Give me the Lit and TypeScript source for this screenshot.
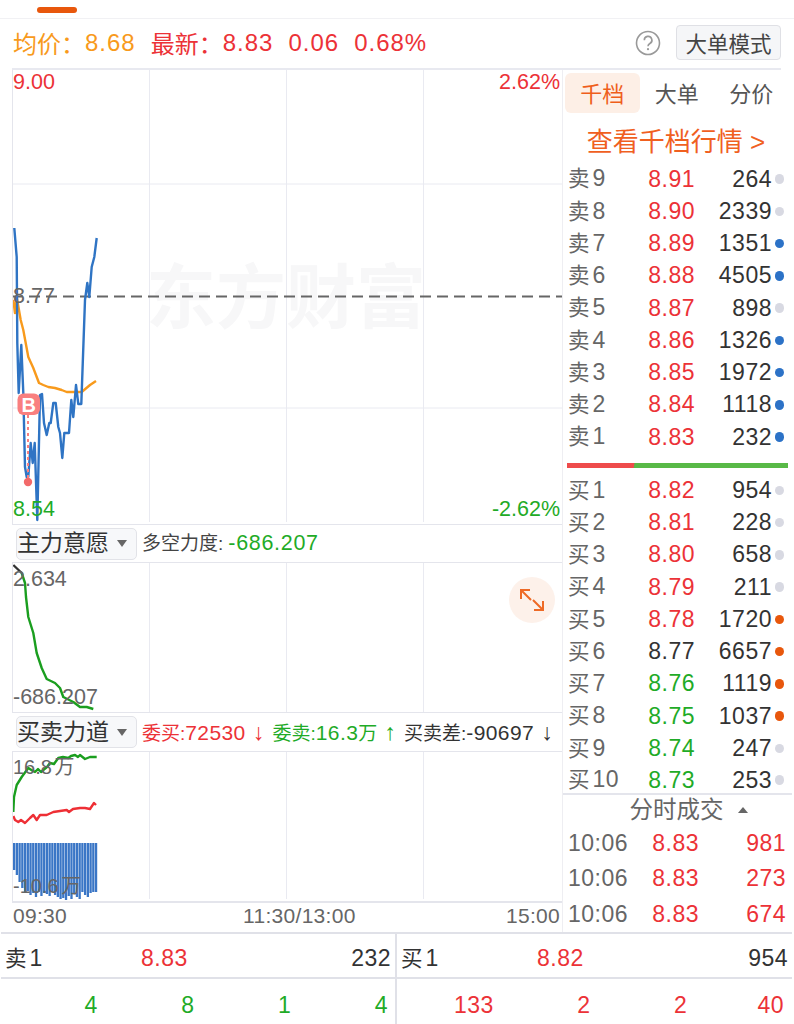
import { LitElement, html, css, svg } from "lit";
import { customElement } from "lit/decorators.js";

type Pt = [number, number];
const path = (p: Pt[]) => p.map((a) => a.join(",")).join(" ");

const BLUE: Pt[] = [[14.3,228],[16.7,257],[17,297],[17.3,343],[18.7,393],[21.3,345],[23.3,393],[25,467],[26.7,477],[28.3,477],[30.7,443],[32.7,463],[34.7,443],[37.3,520],[40,395],[42,394],[44,423],[46.7,435],[49.3,423],[50.7,423],[53.3,403],[55.7,403],[58.3,427],[60,433],[62.3,458],[64.3,433],[69,433],[71.3,400],[73.3,417],[76,385],[78.3,404],[81.3,404],[85,300],[87.3,283],[89.3,297],[91.7,267],[94.3,257],[96.7,238]];
const AVG: Pt[] = [[13.3,300],[15,313],[16.7,297],[20.7,320],[23.3,330],[28.3,357],[33.3,368],[39,383],[43.3,385],[48.3,387],[55,388],[61.7,390],[66.7,392],[81.7,392],[90,385],[96,381]];
const WILL: Pt[] = [[21.7,573],[25,583],[26,597],[28.3,617],[33.3,633],[36.7,653],[41.7,668],[46.7,679],[55,683],[60,688],[63.3,697],[73.3,702],[80,707],[86.7,707],[93.3,709]];
const GREEN: Pt[] = [[13.3,812],[14,797],[16.7,785],[21.7,777],[28.3,768],[33,771],[35,772],[38,769],[41,772],[43.3,770],[47,767],[50,763],[54,764],[58.3,758],[63,757],[68.3,758],[71,756],[75,755],[78,757],[80,755],[85,759],[90,757],[96.7,757]];
const RED: Pt[] = [[13.3,816],[15,820],[18.3,822],[21,820],[25,823],[28,820],[30,818],[33.3,815],[36.7,820],[40,815],[46.7,815],[53.3,812],[60,811],[66.7,810],[69,812],[73,809],[80,808],[85,808],[90,809],[94,803],[96,805]];
const BOTTOMS = [870,875,882,888,893,891,895,893,897,892,896,893,894,896,892,895,897,899,898,900,896,899,894,897,899,892,895,897,893,892,892];

const ASKS = [
  ["卖","9","8.91","264","g"],["卖","8","8.90","2339","g"],["卖","7","8.89","1351","b"],
  ["卖","6","8.88","4505","b"],["卖","5","8.87","898","g"],["卖","4","8.86","1326","b"],
  ["卖","3","8.85","1972","b"],["卖","2","8.84","1118","b"],["卖","1","8.83","232","b"],
];
const BIDS = [
  ["买","1","8.82","954","g","red"],["买","2","8.81","228","g","red"],["买","3","8.80","658","g","red"],
  ["买","4","8.79","211","g","red"],["买","5","8.78","1720","o","red"],["买","6","8.77","6657","o","flat"],
  ["买","7","8.76","1119","o","green"],["买","8","8.75","1037","o","green"],["买","9","8.74","247","g","green"],
  ["买","10","8.73","253","g","green"],
];

@customElement("app-root")
export class AppRoot extends LitElement {
  static styles = css`
    :host { display: block; width: 794px; height: 1024px; overflow: hidden; background: #fff; color: #333;
      font-family: "Liberation Sans", "Noto Sans CJK SC", sans-serif; }
    * { box-sizing: border-box; }
    .strip { height: 19px; border-bottom: 1px solid #f1f1f4; padding: 7px 0 0 37px; }
    .strip i { display: block; width: 40px; height: 5.5px; border-radius: 3px; background: #e8570c; }
    .head { height: 51px; margin: 0 13px 0 12px; padding: 0 0 2px 1px; display: flex; align-items: center;
      border-bottom: 2px solid #e8e9f0; font-size: 24px; letter-spacing: .8px; }
    .head .m { margin-right: 15px; letter-spacing: 1px; }
    .head .l { letter-spacing: 0; }
    .orange { color: #f89a1c; } .red { color: #ec3237; } .green { color: #1fab27; } .flat { color: #333; }
    .help { margin-left: auto; margin-right: 15px; width: 26px; height: 26px; display: block; }
    .mode { width: 105px; height: 35px; border: 1px solid #dfe0e5; border-radius: 4px; background: #f5f6f8;
      font-size: 21.5px; letter-spacing: 0; color: #444; display: flex; align-items: center; justify-content: center; }
    .body { display: flex; height: 862px; }
    .left { width: 562px; padding-left: 12px; flex: none; }
    .right { width: 230px; flex: none; border-left: 1px solid #eeeef2; }
    svg.chart { display: block; width: 550px; border-left: 1px solid #e4e5ec; }
    .c1 { height: 454px; } .c2 { height: 149px; } .c3 { height: 149px; }
    .grid { stroke: #e9eaf1; stroke-width: 1; }
    .line { fill: none; stroke-width: 2.4; stroke-linejoin: round; }
    .t { font-size: 21.5px; }
    .t.r { fill: #ec3237; } .t.g { fill: #1fab27; } .t.k { fill: #666; }
    .t.w { font-size: 20px; word-spacing: -3px; }
    .sel { display: flex; align-items: center; padding-left: 4px; border-top: 1.5px solid #e4e5ec;
      border-bottom: 1.5px solid #e4e5ec; white-space: nowrap; line-height: 1; }
    .sel.a { height: 39px; } .sel.b { height: 40px; }
    .pick { width: 121px; height: 32px; flex: none; border: 1px solid #e2e3e8; border-radius: 5px; background: #f7f8fa;
      display: flex; align-items: center; font-size: 23px; color: #333; margin-right: 5px; padding-right: 9px; justify-content: space-between; }
    .pick b { width: 0; height: 0; border-left: 5px solid transparent; border-right: 5px solid transparent; border-top: 7px solid #666; }
    .s1 { font-size: 19px; color: #444; }
    .s1 span { font-size: 21.5px; letter-spacing: .7px; margin-left: 5px; }
    .s2 { font-size: 19px; display: flex; gap: 8px; color: #333; padding-top: 1px; }
    .s2 .red { color: #ec3237; } .s2 .green { color: #1fab27; }
    .s2 u { text-decoration: none; font-size: 21px; letter-spacing: .4px; }
    .s2 s { text-decoration: none; font-size: 23px; margin-left: 2px; }
    .axis { height: 31px; display: grid; grid-template-columns: 230px auto 1fr; align-items: center; padding: 0 2px 5px 1px; line-height: 1;
      border-top: 2px solid #e4e5ec; font-size: 21px; color: #666; letter-spacing: .3px; }
    .axis span:last-child { text-align: right; }
    .tabs { display: grid; grid-template-columns: repeat(3, 74.5px); padding: 3px 0 0 2px; height: 43px; font-size: 22px; color: #555; }
    .tabs div { display: flex; align-items: center; justify-content: center; border-radius: 6px; padding-bottom: 3px; }
    .tabs .on { background: #fdefe6; color: #ef5e1a; }
    .link { height: 50px; display: flex; align-items: center; justify-content: center; padding: 3px 3px 0 0; font-size: 26px; color: #f0601f; }
    .row { height: 32.25px; display: grid; grid-template-columns: 58px 69px 77px 12px; padding-left: 5px; align-items: center; font-size: 23px; letter-spacing: .5px; line-height: 1; }
    .lab { color: #666; white-space: nowrap; }
    .lab em { font-style: normal; font-size: 21.5px; margin-right: 3px; letter-spacing: 0; }
    .row .p, .row .q { text-align: right; }
    .row .q { color: #333; }
    .row i { justify-self: end; width: 9.5px; height: 9.5px; border-radius: 50%; }
    .row i.g { background: #d8d9e2; } .row i.b { background: #2c72c7; } .row i.o { background: #e8570c; }
    .split { height: 4.5px; margin: 10px 4px 6.5px 4px; background: linear-gradient(100deg, #ee4b4b 66px, #58b947 67px); }
    .bids { height: 319px; }
    .bids .row:last-child { height: 29px; padding-top: 2px; }
    .fold { height: 32px; border-top: 2px solid #e4e5ec; display: flex; align-items: center; justify-content: center; gap: 14px; font-size: 23.5px; color: #666; padding: 0 0 0 22px; line-height: 1; }
    .fold b { width: 0; height: 0; border-left: 5px solid transparent; border-right: 5px solid transparent; border-bottom: 6px solid #666; }
    .tr { height: 35.5px; display: grid; grid-template-columns: 62px 69px 87px; padding-left: 5px; align-items: center; font-size: 23px; letter-spacing: .5px; color: #ec3237; }
    .tr span { text-align: right; }
    .tr .tm { color: #666; text-align: left; white-space: nowrap; }
    .foot { display: flex; height: 92px; border-top: 2px solid #e0e1e8; margin-left: 1px; width: 791px; }
    .side { flex: none; width: 394px; }
    .side + .side { flex: 1; border-left: 2px solid #e0e1e8; }
    .top { height: 45px; border-bottom: 2px solid #e0e1e8; display: grid; grid-template-columns: 136px auto 1fr; padding: 6px 4px 0; align-items: center; font-size: 23px; letter-spacing: .5px; line-height: 1; }
    .top .q { text-align: right; }
    .top .lab { color: #333; }
    .bot { height: 45px; display: grid; grid-template-columns: repeat(4, 96.75px); padding-top: 8px; align-items: center; font-size: 23px; letter-spacing: .5px; line-height: 1; text-align: right; }
  `;

  grid(y0: number, y1: number, hs: number[] = []) {
    return svg`
      ${[149.5, 286.5, 423.5].map((x) => svg`<line class="grid" x1=${x} x2=${x} y1=${y0} y2=${y1}></line>`)}
      ${hs.map((y) => svg`<line class="grid" x1="12" x2="562" y1=${y} y2=${y}></line>`)}`;
  }

  row(r: string[], tone: string) {
    return html`<div class="row"><span class="lab"><em>${r[0]}</em>${r[1]}</span><span class="p ${tone}">${r[2]}</span><span class="q">${r[3]}</span><i class=${r[4]}></i></div>`;
  }

  render() {
    return html`
      <div class="strip"><i></i></div>
      <div class="head">
        <span class="orange l">均价&#xFF1A;</span><span class="orange m">8.68</span>
        <span class="red l">最新&#xFF1A;</span><span class="red m">8.83</span>
        <span class="red m">0.06</span><span class="red m">0.68%</span>
        <svg class="help" viewBox="0 0 26 26"><circle cx="13" cy="13" r="11.5" fill="none" stroke="#999" stroke-width="1.6"></circle><path d="M9.3 10.2a3.8 3.8 0 1 1 5.6 3.3c-1.3.8-1.9 1.4-1.9 2.7" fill="none" stroke="#999" stroke-width="1.6"></path><circle cx="13" cy="19.2" r="1.1" fill="#999"></circle></svg>
        <div class="mode">大单模式</div>
      </div>
      <div class="body">
        <div class="left">
          <svg class="chart c1" viewBox="13 70 549 454">
            ${this.grid(70, 522, [184, 408])}
            <text x="146" y="323" font-size="70" font-weight="700" fill="#f7f7f8">东方财富</text>
            <line x1="12" x2="562" y1="296.5" y2="296.5" stroke="#666" stroke-width="2" stroke-dasharray="11 6"></line>
            <polyline class="line" stroke="#f89a1c" points=${path(AVG)}></polyline>
            <polyline class="line" stroke="#2f74c4" points=${path(BLUE)}></polyline>
            <line x1="28" x2="28" y1="415" y2="480" stroke="#f97f7f" stroke-width="2" stroke-dasharray="3 3"></line>
            <circle cx="28" cy="482" r="4.2" fill="#f26a6a"></circle>
            <rect x="17.5" y="393.5" width="22.5" height="21.5" rx="6" fill="#f97f7f"></rect>
            <text x="28.7" y="411.5" text-anchor="middle" font-size="20" font-weight="700" fill="#fff">B</text>
            <text class="t r" x="13" y="89">9.00</text>
            <text class="t r" x="560" y="89" text-anchor="end">2.62%</text>
            <text class="t k" x="13" y="303">8.77</text>
            <text class="t g" x="13" y="516">8.54</text>
            <text class="t g" x="560" y="516" text-anchor="end">-2.62%</text>
          </svg>
          <div class="sel a"><div class="pick"><span>主力意愿</span><b></b></div><div class="s1">多空力度:<span class="green">-686.207</span></div></div>
          <svg class="chart c2" viewBox="13 563 549 149">
            ${this.grid(563, 712)}
            <polyline class="line" stroke="#333" points="13.3,565 21.7,573"></polyline>
            <polyline class="line" stroke="#1a9e1f" points=${path(WILL)}></polyline>
            <text class="t k" x="13" y="586">2.634</text>
            <text class="t k" x="13" y="704">-686.207</text>
            <circle cx="532" cy="600" r="23" fill="#fdf1ea"></circle>
            <path d="M521 599v-9h9M521 590l10 10M543 601v9h-9M543 610l-10-10" fill="none" stroke="#ee6a26" stroke-width="2"></path>
          </svg>
          <div class="sel b">
            <div class="pick"><span>买卖力道</span><b></b></div>
            <div class="s2">
              <span class="red">委买:<u>72530</u> <s>↓</s></span><span class="green">委卖:<u>16.3</u>万 <s>↑</s></span><span>买卖差:<u>-90697</u> <s>↓</s></span>
            </div>
          </div>
          <svg class="chart c3" viewBox="13 752 549 149">
            ${this.grid(752, 899)}
            ${BOTTOMS.map((b, i) => svg`<rect x=${13 + i * 2.73} y="843" width="2.3" height=${b - 843} fill="#3a76c6"></rect>`)}
            <polyline class="line" stroke="#1a9e1f" points=${path(GREEN)}></polyline>
            <polyline class="line" stroke="#ee2f35" points=${path(RED)}></polyline>
            <text class="t k w" x="13" y="774">16.8 万</text>
            <text class="t k w" x="13" y="893">-10.6 万</text>
          </svg>
          <div class="axis"><span>09:30</span><span>11:30/13:00</span><span>15:00</span></div>
        </div>
        <div class="right">
          <div class="tabs"><div class="on">千档</div><div>大单</div><div>分价</div></div>
          <div class="link">查看千档行情 &gt;</div>
          ${ASKS.map((r) => this.row(r, "red"))}
          <div class="split"></div>
          <div class="bids">${BIDS.map((r) => this.row(r, r[5]))}</div>
          <div class="fold">分时成交<b></b></div>
          ${["981", "273", "674"].map((q) => html`<div class="tr"><span class="tm">10:06</span><span>8.83</span><span>${q}</span></div>`)}
        </div>
      </div>
      <div class="foot">
        <div class="side">
          <div class="top"><span class="lab"><em>卖</em>1</span><span class="red">8.83</span><span class="q">232</span></div>
          <div class="bot green"><span>4</span><span>8</span><span>1</span><span>4</span></div>
        </div>
        <div class="side">
          <div class="top"><span class="lab"><em>买</em>1</span><span class="red">8.82</span><span class="q">954</span></div>
          <div class="bot red"><span>133</span><span>2</span><span>2</span><span>40</span></div>
        </div>
      </div>
    `;
  }
}
